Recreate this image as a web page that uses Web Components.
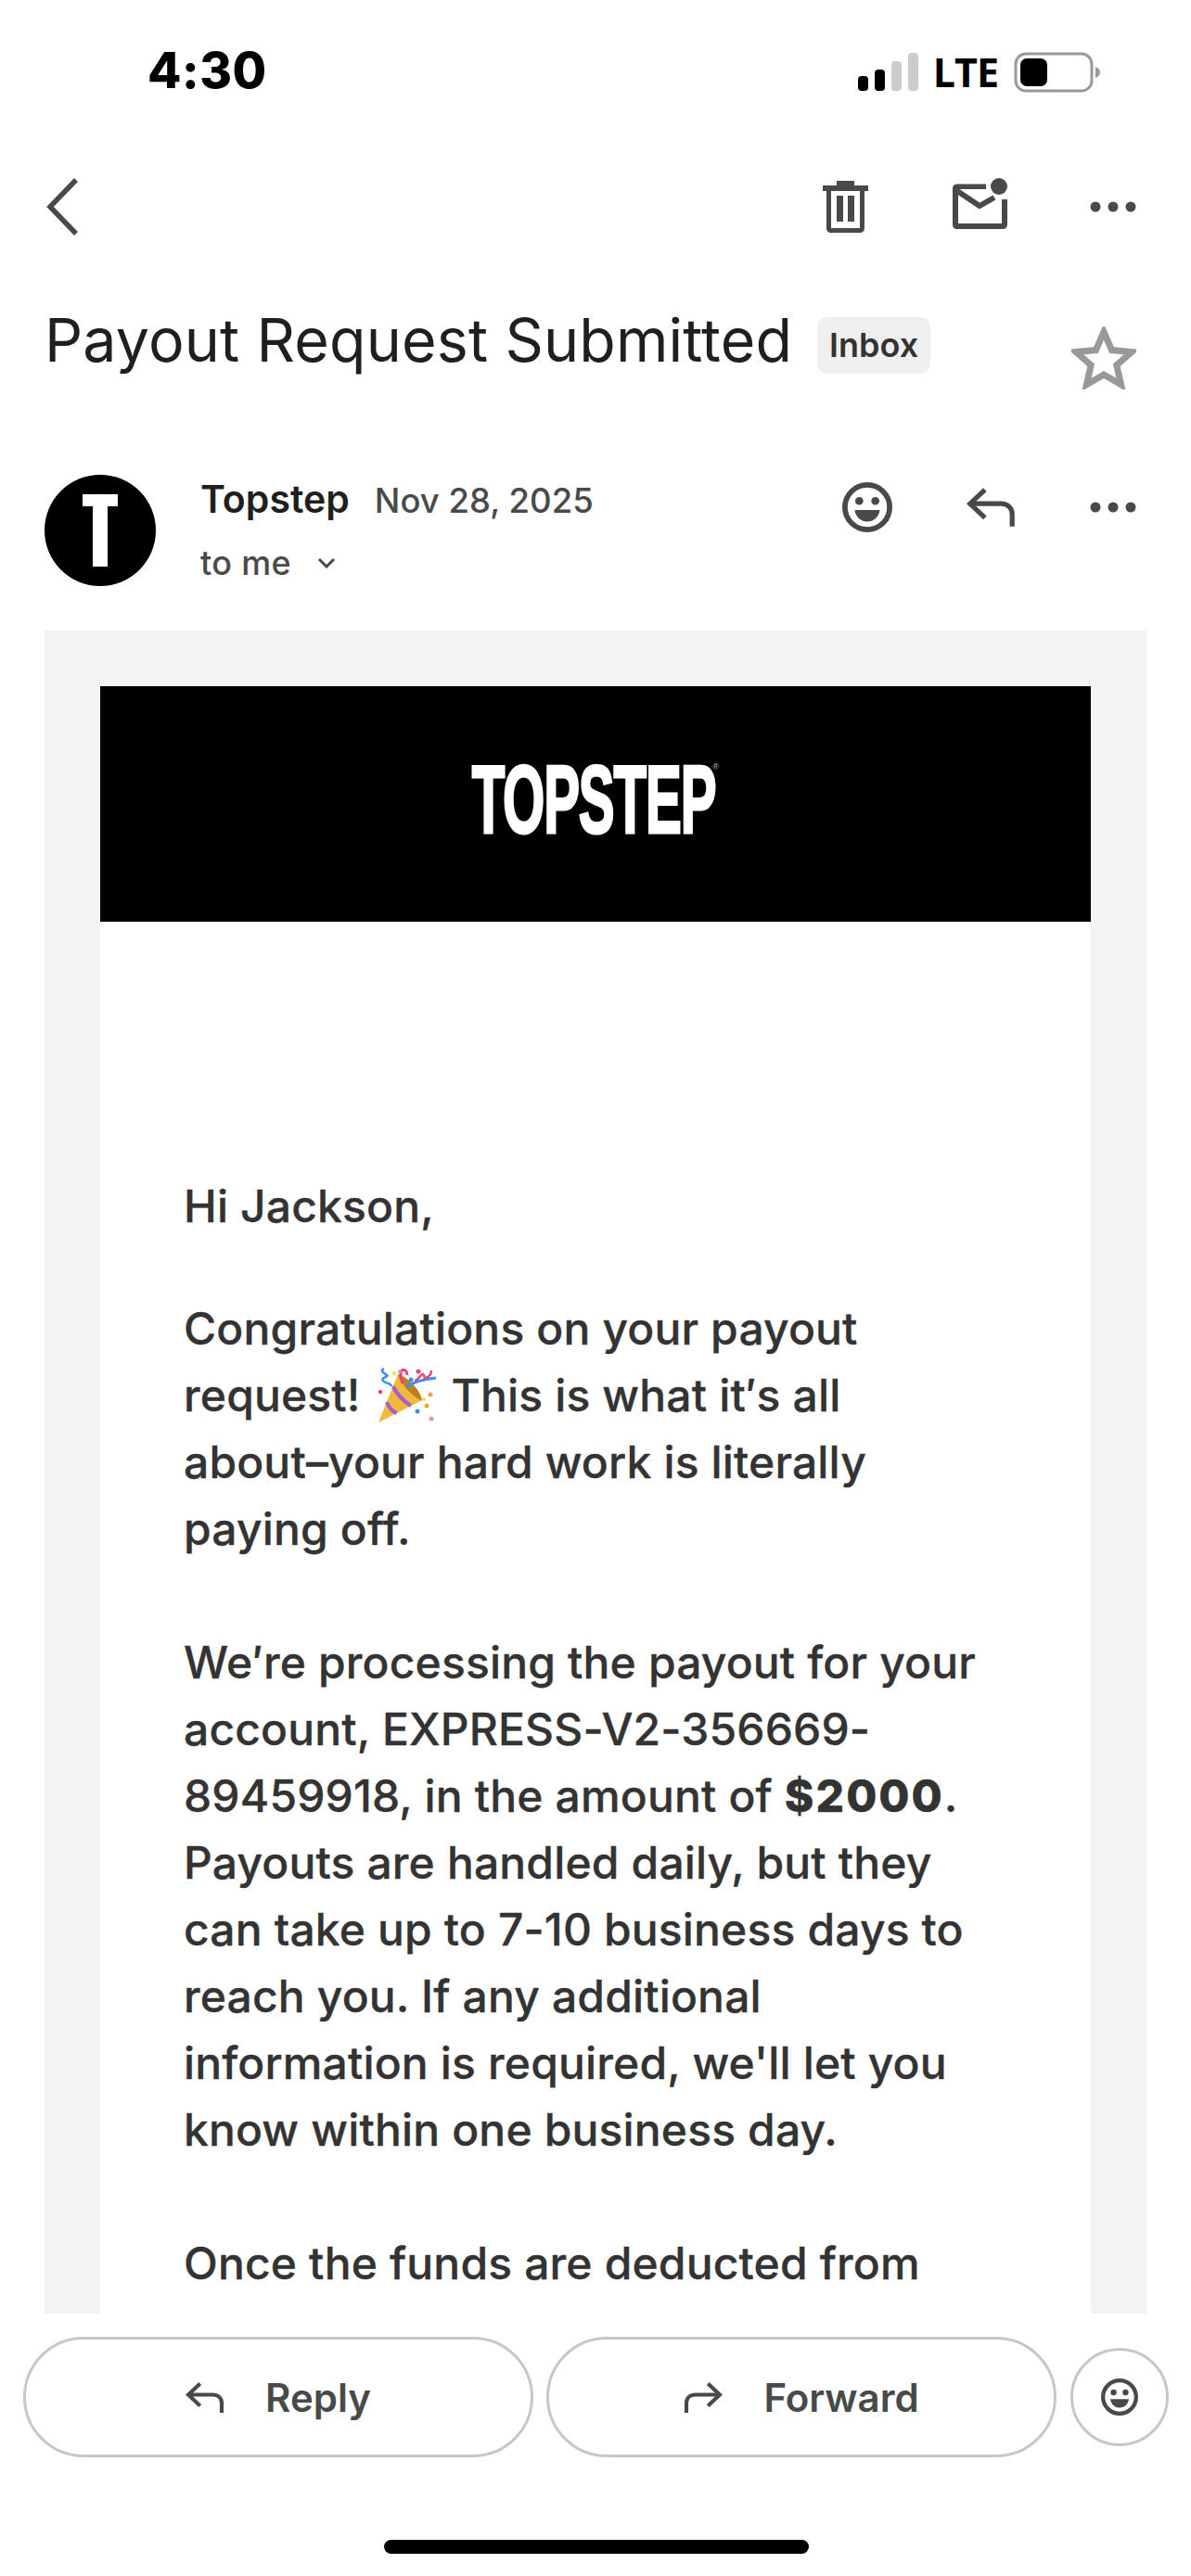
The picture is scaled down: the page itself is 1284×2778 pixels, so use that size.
<!DOCTYPE html>
<html>
<head>
<meta charset="utf-8">
<style>
  html, body { margin: 0; padding: 0; background: #fff; }
</style>
</head>
<body>
<mail-screen>
  <status-bar slot="status"></status-bar>
  <mail-toolbar slot="toolbar"></mail-toolbar>
  <subject-line slot="subject">Payout Request Submitted</subject-line>
  <sender-row slot="sender"></sender-row>
  <email-body slot="body"></email-body>
  <reply-bar slot="bottom"></reply-bar>
</mail-screen>

<script>
const ICON = {
  dots: `<svg width="50" height="12" viewBox="0 0 50 12"><circle cx="6" cy="6" r="5.5"/><circle cx="25" cy="6" r="5.5"/><circle cx="44" cy="6" r="5.5"/></svg>`,
  smile: (s) => `<svg width="${s}" height="${s}" viewBox="0 0 56 56"><circle cx="28" cy="28" r="25" fill="none" stroke="currentColor" stroke-width="6"/><circle cx="19" cy="21" r="4.500"/><circle cx="37" cy="21" r="4.500"/><path d="M14 31h28c-1 8-7 13-14 13s-13-5-14-13z"/></svg>`,
  reply: (w, h) => `<svg width="${w}" height="${h}" viewBox="0 0 56 46" fill="none" stroke="currentColor" stroke-width="5.500"><path d="M21 3 4 19l17 16"/><path d="M5 19h34c8 0 13 5 13 12v14"/></svg>`,
  forward: (w, h) => `<svg width="${w}" height="${h}" viewBox="0 0 56 46" fill="none" stroke="currentColor" stroke-width="5.500"><path d="M35 3l17 16-17 16"/><path d="M51 19H17C9 19 4 24 4 31v14"/></svg>`,
};

class MailScreen extends HTMLElement {
  constructor() {
    super();
    this.attachShadow({mode: 'open'}).innerHTML = `
      <style>
        :host { display: flex; flex-direction: column; width: 1284px; height: 2778px; overflow: hidden;
          background: #fff; font-family: Inter, "Liberation Sans", sans-serif; }
        .body { flex: 1; min-height: 0; overflow: hidden; margin: 0 48px; }
      </style>
      <slot name="status"></slot>
      <slot name="toolbar"></slot>
      <slot name="subject"></slot>
      <slot name="sender"></slot>
      <div class="body"><slot name="body"></slot></div>
      <slot name="bottom"></slot>`;
  }
}

class StatusBar extends HTMLElement {
  constructor() {
    super();
    this.attachShadow({mode: 'open'}).innerHTML = `
      <style>
        :host { display: flex; align-items: center; justify-content: space-between; height: 152px;
          box-sizing: border-box; padding: 0 97px 0 159px; color: #000; }
        .time { font: 800 53px Inter, sans-serif; letter-spacing: 0.5px; }
        .right { display: flex; align-items: center; gap: 15px; margin-top: 3px; }
        .lte { font: 700 43px "Open Sans", sans-serif; letter-spacing: -1px; line-height: 40px; margin-right: 2px; }
        svg { display: block; }
      </style>
      <span class="time">4:30</span>
      <div class="right">
        <svg width="66" height="42" viewBox="0 0 66 42">
          <rect x="0" y="25" width="11" height="16" rx="4"/>
          <rect x="18" y="18" width="11" height="23" rx="4"/>
          <rect x="36" y="9" width="11" height="32" rx="4" fill="#ccc"/>
          <rect x="54" y="0" width="11" height="41" rx="4" fill="#ccc"/>
        </svg>
        <span class="lte">LTE</span>
        <svg width="94" height="44" viewBox="0 0 94 44">
          <rect x="2" y="2" width="82" height="40" rx="11" fill="none" stroke="#999" stroke-width="3"/>
          <rect x="7" y="7" width="29" height="30" rx="7"/>
          <path d="M88 16c3 1 5 3 5 6s-2 5-5 6z" fill="#999"/>
        </svg>
      </div>`;
  }
}

class MailToolbar extends HTMLElement {
  constructor() {
    super();
    this.attachShadow({mode: 'open'}).innerHTML = `
      <style>
        :host { display: flex; align-items: center; height: 142px; padding: 0 59px 0 49px; color: #484a4a; fill: #484a4a; }
        .space { flex: 1; }
        svg { display: block; }
        .trash { margin-right: 91px; }
        .mail { margin-right: 88px; margin-bottom: 7px; }
      </style>
      <svg width="36" height="62" viewBox="0 0 36 62" fill="none" stroke="currentColor" stroke-width="5.500"><path d="M33 2 5 31l28 29"/></svg>
      <div class="space"></div>
      <svg class="trash" width="49" height="56" viewBox="0 0 49 56">
        <path d="M15 0h19v5h15v6H0V5h15z"/>
        <path d="M4 11h41v40c0 3-2 5-5 5H9c-3 0-5-2-5-5zM9 11v40h31V11z" fill-rule="evenodd"/>
        <rect x="15" y="16" width="7" height="28"/><rect x="27" y="16" width="7" height="28"/>
      </svg>
      <svg class="mail" width="60" height="56" viewBox="0 0 60 56">
        <path d="M5 6.500h31V12H6v37h47V23h6v27c0 3-2 5-5 5H5c-3 0-5-2-5-5V11c0-3 2-4.500 5-4.500z"/>
        <path d="M5 14l24 16 16-9" fill="none" stroke="currentColor" stroke-width="6"/>
        <circle cx="50" cy="9" r="9"/>
      </svg>
      <span style="display:block;width:50px">${ICON.dots}</span>`;
  }
}

class SubjectLine extends HTMLElement {
  constructor() {
    super();
    this.attachShadow({mode: 'open'}).innerHTML = `
      <style>
        :host { display: flex; align-items: flex-start; height: 218px; padding: 0 59px 0 48px; box-sizing: border-box; }
        .title { font: 400 64.500px/90px Inter, sans-serif; color: #1f1f1f; margin-top: 28px; letter-spacing: 0.15px; white-space: nowrap; }
        .badge { font: 600 36px/61px Inter, sans-serif; color: #333; background: #efefef; border-radius: 11px;
          padding: 0 13px; margin: 48px 0 0 27px; height: 61px; }
        .space { flex: 1; }
        svg { display: block; margin-top: 58px; }
      </style>
      <span class="title"><slot></slot></span>
      <span class="badge">Inbox</span>
      <div class="space"></div>
      <svg width="70" height="68" viewBox="0 0 70 68" fill="none" stroke="#999" stroke-width="7"><path d="M35 6l8.600 19.600 21.400 2-16.200 14.200 4.800 21L35 52 16.400 62.800l4.800-21L5 27.600l21.400-2z"/></svg>`;
  }
}

class SenderRow extends HTMLElement {
  constructor() {
    super();
    this.attachShadow({mode: 'open'}).innerHTML = `
      <style>
        :host { display: flex; align-items: flex-start; height: 168px; padding: 0 59px 0 48px; box-sizing: border-box; color: #484a4a; fill: #484a4a; }
        .avatar { width: 120px; height: 120px; border-radius: 50%; background: #000; display: flex; justify-content: center; align-items: center; flex: none; }
        .info { margin-left: 48px; flex: 1; }
        .top { display: flex; align-items: baseline; height: 58px; margin-top: -3px; }
        .name { font: 600 41px/58px Inter, sans-serif; color: #1f1f1f; }
        .date { font: 500 36.500px/58px Inter, sans-serif; margin-left: 27px; color: #484a4a; }
        .to { display: flex; align-items: center; font: 500 36px/44px Inter, sans-serif; margin-top: 18px; gap: 28px; letter-spacing: 0.3px; }
        .icons { display: flex; align-items: center; gap: 80px; margin-top: 8px; }
        svg { display: block; }
      </style>
      <div class="avatar">
        <svg width="38" height="78" viewBox="0 0 38 78"><path d="M0 0h38v13H27v65H11V13H0z" fill="#fff"/></svg>
      </div>
      <div class="info">
        <div class="top"><span class="name">Topstep</span><span class="date">Nov 28, 2025</span></div>
        <div class="to"><span>to me</span><svg width="20" height="12" viewBox="0 0 20 12" fill="none" stroke="currentColor" stroke-width="3"><path d="M2 2l8 8 8-8"/></svg></div>
      </div>
      <div class="icons">
        ${ICON.smile(54)}
        ${ICON.reply(53, 44)}
        ${ICON.dots}
      </div>`;
  }
}

class EmailBody extends HTMLElement {
  constructor() {
    super();
    this.attachShadow({mode: 'open'}).innerHTML = `
      <style>
        :host { display: block; background: #f3f3f3; padding: 60px 60px 0; height: 1900px; }
        .card { background: #fff; height: 100%; }
        .logo { height: 254px; background: #000; display: flex; align-items: center; justify-content: center; overflow: hidden; }
        .mark { position: relative; width: 263px; height: 78px; margin: -8px 5px 0 0; }
        .word { position: absolute; left: 50%; top: 0; font: 700 103px/78px "Liberation Sans", sans-serif; color: #fff; letter-spacing: -2px;
          -webkit-text-stroke: 3px #fff; transform: translateX(-50%) scaleX(0.565); white-space: nowrap; }
        .reg { position: absolute; right: -4px; top: -2px; font: 400 9px/10px "Liberation Sans", sans-serif; color: #bbb; }
        .copy { padding: 271px 90px 0; font: 500 48px/72px Inter, sans-serif; color: #333; letter-spacing: 0.15px;
          -webkit-text-stroke: 0.3px #333; }
        p { margin: 0 0 72px; }
        p.hi { margin-bottom: 60px; }
        b { font-weight: 800; letter-spacing: 2px; }
        svg { vertical-align: -14px; margin: 0 3px; }
      </style>
      <div class="card">
        <div class="logo"><div class="mark"><span class="word">TOPSTEP</span><span class="reg">®</span></div></div>
        <div class="copy">
          <p class="hi">Hi Jackson,</p>
          <p>Congratulations on your payout<br>request! <svg width="66" height="62" viewBox="0 0 66 62">
            <path d="M3 60 24 8l26 28z" fill="#f0b93a"/>
            <path d="M24 8c9 2 24 16 26 28-7-1-23-16-26-28z" fill="#b9811f"/>
            <path d="M18.700 21c4 8 11 16 19.300 21M11.800 38c2 5 6 10 10.900 12" fill="none" stroke="#a65ad8" stroke-width="4"/>
            <path d="M33 22c10-7 20-9 32-10" fill="none" stroke="#3d8ff0" stroke-width="3"/>
            <path d="M29 18c-2-6-3-11-1-14 3-2 6 0 6 5" fill="none" stroke="#e8437b" stroke-width="3"/>
            <path d="M42 15c5-1 6-7 9-7 3 1 0 5 3 4 3-1 6-4 6-8" fill="none" stroke="#e8437b" stroke-width="2.500"/>
            <path d="M9 2C4 4 9 7 12 9c3 2-7 2-4 6 2 3 8 2 9 6" fill="none" stroke="#3d8ff0" stroke-width="2.500"/>
            <circle cx="38" cy="14" r="2.500" fill="#3d8ff0"/><circle cx="20" cy="7" r="2.200" fill="#f3e04a"/>
            <circle cx="59" cy="30" r="2.500" fill="#f2a04a"/><circle cx="55" cy="42" r="2.500" fill="#f2a04a"/>
            <circle cx="45" cy="48" r="2.500" fill="#3d8ff0"/><circle cx="60" cy="56" r="2.500" fill="#f28ab0"/>
            <circle cx="5" cy="27" r="2.200" fill="#e8437b"/><circle cx="46" cy="5" r="2.500" fill="#e8437b"/>
            <circle cx="26" cy="5" r="2" fill="#f28ab0"/><circle cx="52" cy="35" r="2" fill="#f3e04a"/>
          </svg> This is what it′s all<br>about–your hard work is literally<br>paying off.</p>
          <p>We′re processing the payout for your<br>account, EXPRESS-V2-356669-<br>89459918, in the amount of <b>$2000</b>.<br>Payouts are handled daily, but they<br>can take up to 7-10 business days to<br>reach you. If any additional<br>information is required, we'll let you<br>know within one business day.</p>
          <p>Once the funds are deducted from</p>
        </div>
      </div>`;
  }
}

class ReplyBar extends HTMLElement {
  constructor() {
    super();
    this.attachShadow({mode: 'open'}).innerHTML = `
      <style>
        :host { display: block; height: 283px; box-sizing: border-box; padding: 25px 24px 0 25px; color: #484a4a; fill: #484a4a; }
        .row { display: flex; align-items: center; gap: 14px; }
        .btn { flex: none; box-sizing: border-box; width: 550px; height: 130px; border: 3px solid #c6c8c8; border-radius: 65px;
          display: flex; align-items: center; justify-content: center; gap: 44px; font: 600 42px Inter, sans-serif; }
        .round { flex: none; box-sizing: border-box; width: 106px; height: 106px; border: 3px solid #c6c8c8; border-radius: 50%;
          display: flex; align-items: center; justify-content: center; margin-left: 1px; }
        .home { width: 458px; height: 15px; border-radius: 8px; background: #000; margin: 89px auto 0; }
        svg { display: block; }
      </style>
      <div class="row">
        <div class="btn">${ICON.reply(42, 35)}<span>Reply</span></div>
        <div class="btn">${ICON.forward(42, 35)}<span>Forward</span></div>
        <div class="round">${ICON.smile(40)}</div>
      </div>
      <div class="home"></div>`;
  }
}

customElements.define('mail-screen', MailScreen);
customElements.define('status-bar', StatusBar);
customElements.define('mail-toolbar', MailToolbar);
customElements.define('subject-line', SubjectLine);
customElements.define('sender-row', SenderRow);
customElements.define('email-body', EmailBody);
customElements.define('reply-bar', ReplyBar);
</script>
</body>
</html>
